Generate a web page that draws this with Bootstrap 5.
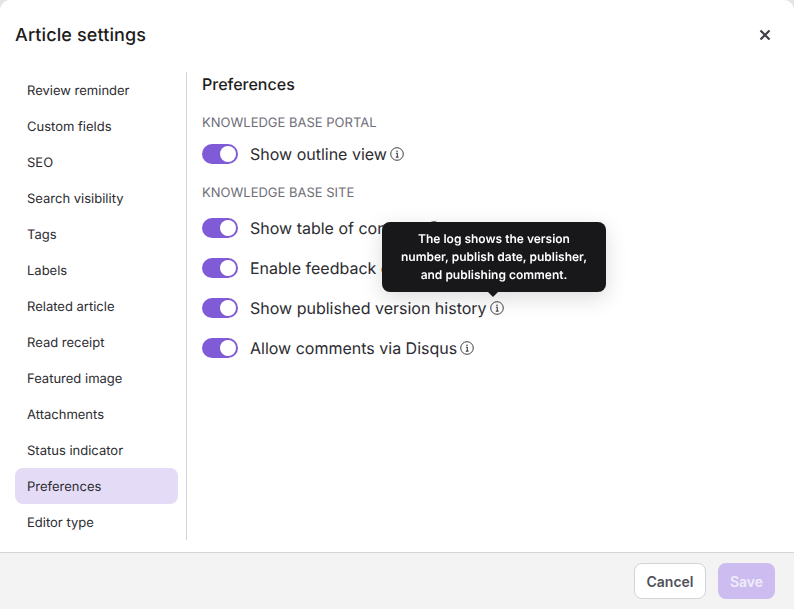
<!DOCTYPE html>
<html lang="en">
<head>
  <meta charset="UTF-8">
  <title>Article settings</title>
  <link rel="stylesheet" href="https://cdn.jsdelivr.net/npm/bootstrap@5.3.0/dist/css/bootstrap.min.css">
  <style>
    html, body { height: 100%; }
    body { background: #e4e4e6; font-family: Inter, "Liberation Sans", sans-serif; color: #1c1c20; overflow: hidden; text-rendering: geometricPrecision; }
    .settings-modal { height: 609px; background: #fff; border: 0; border-radius: 10px 10px 0 0; }
    .settings-modal .modal-header { height: 72px; padding: 0 20px 0 15px; border: 0; }
    .modal-title { font-size: 18px; font-weight: 500; line-height: 24px; letter-spacing: .12px; }
    .close-btn { width: 18px; height: 18px; padding: 0; border: 0; background: none; color: #3f3f46; line-height: 0; margin-bottom: 2px; }
    .settings-body { height: 468px; padding: 0 0 0 15px; }
    .side-nav { width: 172px; border-right: 1px solid #d4d4d8; padding-right: 8px; }
    .side-nav .nav-link { height: 36px; width: 163px; padding: 2px 12px 0; display: flex; align-items: center; font-size: 13px; line-height: 20px; color: #2c2c31; border-radius: 8px; }
    .side-nav .nav-link.active { background: #e4dcf7; color: #2c2c31; }
    .content { padding: 0 0 0 15px; position: relative; }
    .content h2 { font-size: 16px; font-weight: 500; line-height: 24px; margin: 0 0 19px; }
    .group-label { font-size: 13px; line-height: 16px; color: #6e6e78; text-transform: uppercase; margin: 0 0 3px; }
    .group-label.next { margin: 11px 0 7px; }
    .toggle-row { height: 40px; gap: 12px; font-size: 16px; color: #2c2c31; }
    .toggle-row .form-check { margin: 0; padding: 0; min-height: 0; line-height: 0; }
    .toggle-row .form-check-input {
      width: 36px; height: 20px; margin: 0; float: none; border: 0; background-color: #7f5bd8; border-radius: 10px;
      background-position: right center;
      background-image: url("data:image/svg+xml,%3csvg xmlns='http://www.w3.org/2000/svg' viewBox='-10 -10 20 20'%3e%3ccircle r='8' fill='%23fff'/%3e%3c/svg%3e");
    }
    .info { width: 14px; height: 14px; margin-left: -9px; color: #3f3f46; flex: none; }
    .tip.tooltip { position: absolute; top: 150px; left: 195px; width: 224px; padding: 0; margin: 0; opacity: 1; font-family: inherit; filter: drop-shadow(0 6px 10px rgba(0,0,0,.14)); --bs-tooltip-arrow-width: 12px; --bs-tooltip-arrow-height: 6px; --bs-tooltip-bg: #18181b; --bs-tooltip-opacity: 1; }
    .tip .tooltip-inner { max-width: none; padding: 8px 12px; height: 70px; font-size: 12px; font-weight: 600; line-height: 18px; border-radius: 8px; background: #18181b; }
    .tip .tooltip-arrow { position: absolute; left: 105px; bottom: -6px; }
    .settings-modal .modal-footer { height: 57px; padding: 0 19px 0 0; gap: 12px; background: #f3f3f3; border-top: 1px solid #d4d4d8; border-radius: 0; flex-wrap: nowrap; align-items: center; margin-top: 12px; }
    .settings-modal .modal-footer > * { margin: 0; }
    .btn-cancel { width: 72px; height: 36px; padding: 0; font-size: 14px; font-weight: 600; color: #52525b; background: #fff; border: 1px solid #d4d4d8; border-radius: 8px; }
    .btn-save { width: 57px; height: 36px; padding: 0; font-size: 14px; font-weight: 600; color: #f1ecfb; background: #cdbcf0; border: 0; border-radius: 8px; }
    .btn-save:disabled { background: #cdbcf0; color: #f1ecfb; opacity: 1; }
  </style>
</head>
<body>
<svg width="0" height="0" class="position-absolute">
  <symbol id="i-info" viewBox="0 0 14 14">
    <circle cx="7" cy="7" r="6.3" fill="none" stroke="currentColor" stroke-width="1"/>
    <circle cx="7" cy="4.2" r=".8" fill="currentColor"/>
    <path d="M5.9 6.3H7.3V10M5.8 10.1H8.6" fill="none" stroke="currentColor" stroke-width="1.1"/>
  </symbol>
</svg>

<div class="modal-content settings-modal">
  <div class="modal-header d-flex justify-content-between">
    <h1 class="modal-title">Article settings</h1>
    <button class="close-btn" type="button" aria-label="Close">
      <svg width="18" height="18" viewBox="0 0 18 18"><path d="M4.5 4.5l9 9M13.500 4.500l-9 9" stroke="currentColor" stroke-width="2.200" fill="none"/></svg>
    </button>
  </div>
  <div class="settings-body d-flex">
    <nav class="nav flex-column flex-nowrap side-nav">
      <a class="nav-link" href="#">Review reminder</a>
      <a class="nav-link" href="#">Custom fields</a>
      <a class="nav-link" href="#">SEO</a>
      <a class="nav-link" href="#">Search visibility</a>
      <a class="nav-link" href="#">Tags</a>
      <a class="nav-link" href="#">Labels</a>
      <a class="nav-link" href="#">Related article</a>
      <a class="nav-link" href="#">Read receipt</a>
      <a class="nav-link" href="#">Featured image</a>
      <a class="nav-link" href="#">Attachments</a>
      <a class="nav-link" href="#">Status indicator</a>
      <a class="nav-link active" href="#">Preferences</a>
      <a class="nav-link" href="#">Editor type</a>
    </nav>
    <div class="content flex-grow-1">
      <h2>Preferences</h2>
      <p class="group-label">Knowledge base portal</p>
      <div class="toggle-row d-flex align-items-center">
        <div class="form-check form-switch"><input class="form-check-input" type="checkbox" checked></div>
        <span>Show outline view</span>
        <svg class="info"><use href="#i-info"/></svg>
      </div>
      <p class="group-label next">Knowledge base site</p>
      <div class="toggle-row d-flex align-items-center">
        <div class="form-check form-switch"><input class="form-check-input" type="checkbox" checked></div>
        <span>Show table of contents</span>
        <svg class="info"><use href="#i-info"/></svg>
      </div>
      <div class="toggle-row d-flex align-items-center">
        <div class="form-check form-switch"><input class="form-check-input" type="checkbox" checked></div>
        <span>Enable feedback on article</span>
        <svg class="info"><use href="#i-info"/></svg>
      </div>
      <div class="toggle-row d-flex align-items-center">
        <div class="form-check form-switch"><input class="form-check-input" type="checkbox" checked></div>
        <span>Show published version history</span>
        <svg class="info"><use href="#i-info"/></svg>
      </div>
      <div class="toggle-row d-flex align-items-center">
        <div class="form-check form-switch"><input class="form-check-input" type="checkbox" checked></div>
        <span>Allow comments via Disqus</span>
        <svg class="info"><use href="#i-info"/></svg>
      </div>
      <div class="tooltip bs-tooltip-top show tip" role="tooltip">
        <div class="tooltip-inner">The log shows the version number, publish date, publisher, and publishing comment.</div>
        <div class="tooltip-arrow"></div>
      </div>
    </div>
  </div>
  <div class="modal-footer d-flex justify-content-end">
    <button class="btn btn-cancel" type="button">Cancel</button>
    <button class="btn btn-save" type="button" disabled>Save</button>
  </div>
</div>
<script src="https://cdn.jsdelivr.net/npm/bootstrap@5.3.0/dist/js/bootstrap.bundle.min.js"></script>
</body>
</html>
